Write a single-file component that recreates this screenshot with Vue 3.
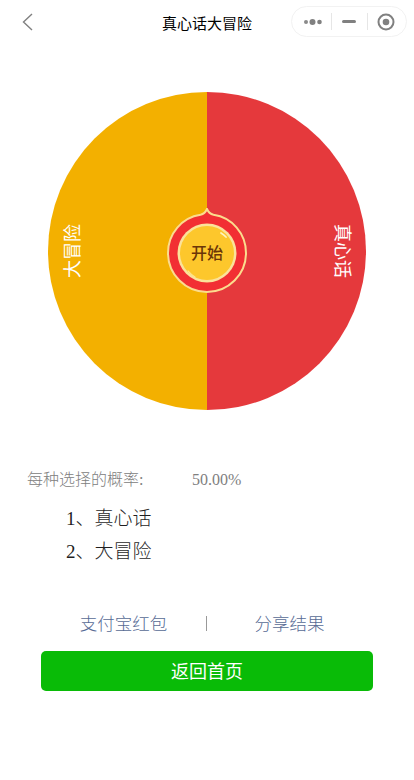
<script setup>
const options = ['真心话', '大冒险']
</script>

<template>
  <div class="page">
    <header class="nav">
      <svg class="back" width="12" height="18" viewBox="0 0 12 18"><path d="M10 1 1.500 9l8.500 8" fill="none" stroke="#808080" stroke-width="1.400"/></svg>
      <div class="title">真心话大冒险</div>
      <div class="capsule">
        <svg class="cap-icon more" width="20" height="8" viewBox="0 0 20 8">
          <circle cx="3" cy="4" r="2" fill="#8a8a8a"/>
          <circle cx="9.500" cy="4" r="3" fill="#808080"/>
          <circle cx="16.500" cy="4" r="2.300" fill="#808080"/>
        </svg>
        <i class="sep"></i>
        <i class="minus"></i>
        <i class="sep"></i>
        <svg class="cap-icon" width="20" height="20" viewBox="0 0 20 20">
          <circle cx="10" cy="10" r="7.500" fill="none" stroke="#808080" stroke-width="2"/>
          <circle cx="10" cy="10" r="3.300" fill="#808080"/>
        </svg>
      </div>
    </header>

    <section class="wheel-wrap">
      <div class="wheel">
        <span class="label label-left">大冒险</span>
        <span class="label label-right">真心话</span>
        <div class="hub">
          <svg width="84" height="90" viewBox="0 0 84 90">
            <path d="M42 1c1.500 3.500 3 5 6.500 5.800C67 9.500 81 25.500 81 45c0 21.500-17.500 39-39 39S3 66.500 3 45C3 25.500 17 9.500 35.500 6.800 39 6 40.500 4.500 42 1z" fill="#f22f33" stroke="#fbdc8e" stroke-width="2"/>
            <circle cx="42" cy="45" r="29.500" fill="#fbe29a"/>
            <circle cx="42" cy="45" r="27" fill="#fdc72c"/>
            <path d="M56 25a24 24 0 0 1 5 4" fill="none" stroke="#fff2c0" stroke-width="1.800" stroke-linecap="round"/>
            <path d="M23 63a26 26 0 0 0 7 6" fill="none" stroke="#ffe48a" stroke-width="1.200" stroke-linecap="round"/>
          </svg>
          <span class="hub-text">开始</span>
        </div>
      </div>
    </section>

    <section class="info">
      <div class="prob"><span class="prob-label">每种选择的概率:</span><span class="prob-value">50.00%</span></div>
      <ol class="list">
        <li v-for="(o, i) in options" :key="o">{{ i + 1 }}、{{ o }}</li>
      </ol>
    </section>

    <div class="links">
      <a class="link">支付宝红包</a>
      <i class="link-sep"></i>
      <a class="link">分享结果</a>
    </div>
    <button class="home">返回首页</button>
  </div>
</template>

<style scoped>
.page {
  width: 414px;
  height: 780px;
  background: #fff;
  overflow: hidden;
  font-family: "Liberation Serif", "Noto Sans CJK SC", serif;
}
.nav {
  position: relative;
  height: 44px;
  display: flex;
  align-items: center;
  justify-content: center;
}
.back {
  position: absolute;
  left: 22px;
  top: 13px;
}
.title {
  font-size: 15px;
  color: #000;
  font-family: "Noto Sans CJK SC", sans-serif;
}
.capsule {
  position: absolute;
  left: 291px;
  top: 6px;
  width: 116px;
  height: 31px;
  box-sizing: border-box;
  border: 1px solid #f2f2f2;
  border-radius: 16px;
  display: flex;
  align-items: center;
  padding-left: 11px;
}
.more { margin-right: 8px; }
.sep {
  width: 1px;
  height: 17px;
  background: #e6e6e6;
}
.minus {
  width: 14px;
  height: 3px;
  border-radius: 2px;
  background: #808080;
  margin: 0 11px 0 10px;
}
.sep + .minus + .sep { margin-right: 8px; }
.wheel-wrap {
  display: flex;
  justify-content: center;
  padding-top: 48px;
}
.wheel {
  position: relative;
  width: 318px;
  height: 318px;
  border-radius: 50%;
  background: linear-gradient(90deg, #f3b000 50%, #e5393c 50%);
}
.label {
  position: absolute;
  top: 149px;
  color: #fff;
  font-size: 18px;
  line-height: 20px;
  font-family: "Noto Sans CJK SC", sans-serif;
  white-space: nowrap;
}
.label-left {
  left: -4px;
  transform: rotate(-90deg);
}
.label-right {
  right: -5px;
  transform: rotate(90deg);
}
.hub {
  position: absolute;
  left: 117px;
  top: 116px;
  width: 84px;
  height: 90px;
}
.hub svg { display: block; }
.hub-text {
  position: absolute;
  left: 0;
  right: 0;
  top: 32px;
  text-align: center;
  font-size: 16px;
  line-height: 24px;
  font-weight: 500;
  color: #6b3508;
  font-family: "Noto Sans CJK SC", sans-serif;
}
.info {
  padding: 59px 0 0 27px;
}
.prob {
  display: flex;
  font-size: 16px;
  line-height: 22px;
  color: #808080;
}
.prob-label { width: 165px; font-weight: 300; }
.list {
  list-style: none;
  margin: 11px 0 0;
  padding: 0 0 0 39px;
  font-size: 19px;
  line-height: 33px;
  color: #1f1f1f;
  font-weight: 300;
}
.links {
  display: flex;
  align-items: center;
  height: 24px;
  margin-top: 43px;
}
.link {
  font-size: 17.500px;
  line-height: 24px;
  color: #576b95;
  font-family: "Noto Sans CJK SC", sans-serif;
  font-weight: 300;
  text-align: center;
}
.link:first-child { width: 206px; padding-left: 41px; box-sizing: border-box; }
.link:last-child { flex: 1; padding-right: 42px; box-sizing: border-box; }
.link-sep {
  width: 1px;
  height: 15px;
  background: #999;
}
.home {
  display: block;
  width: 332px;
  height: 40px;
  margin: 16px 0 0 41px;
  padding: 0 0 2px;
  border: 0;
  border-radius: 5px;
  background: #09bb07;
  color: #fff;
  font-size: 18px;
  font-family: "Noto Sans CJK SC", sans-serif;
}
</style>
